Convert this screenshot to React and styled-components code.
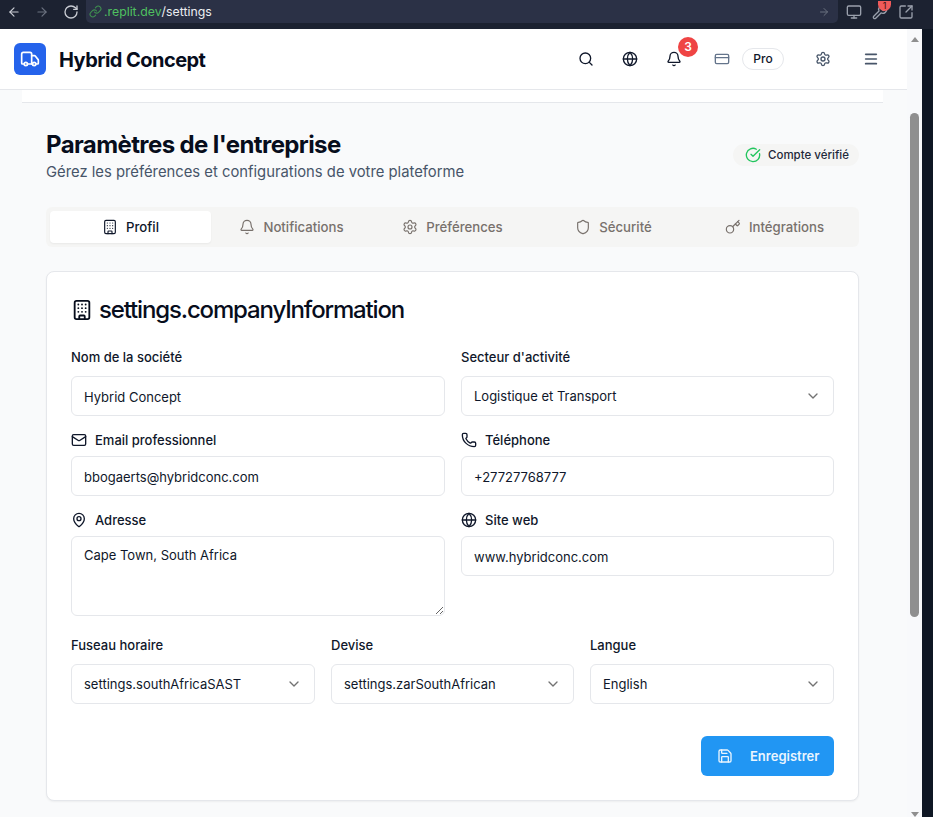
import React from 'react'
import styled, { createGlobalStyle } from 'styled-components'
import {
  ArrowLeft, ArrowRight, RotateCw, Link, Monitor, Wrench, SquareArrowOutUpRight, Truck, Search, Globe,
  Bell, CreditCard, Settings, Menu, CircleCheckBig, Building, Shield, Key, Mail, Phone, MapPin, ChevronDown, Save,
} from 'lucide-react'

const GlobalStyle = createGlobalStyle`
  html, body { margin: 0; padding: 0; height: 100%; overflow: hidden; }
  * { box-sizing: border-box; }
  body { font-family: Inter, "Liberation Sans", sans-serif; color: #0f172a; }
`

const Screen = styled.div`
  width: 933px;
  height: 817px;
  display: flex;
  flex-direction: column;
  overflow: hidden;
  background: #1c2231;
`

const BrowserBar = styled.div`
  height: 29px;
  flex: none;
  display: flex;
  align-items: flex-start;
  color: #c9ccd3;
  background: #1c2231;
`

const NavIcons = styled.div`
  width: 86px;
  height: 23px;
  flex: none;
  display: flex;
  align-items: center;
  gap: 14px;
  padding-left: 7px;
`

const AddressBar = styled.div`
  width: 752px;
  height: 23px;
  flex: none;
  display: flex;
  align-items: center;
  gap: 2px;
  padding: 0 8px 0 3px;
  background: #2b3146;
  border-radius: 0 0 5px 5px;
  font-size: 12.3px;
`

const Host = styled.span`
  color: #4fc060;
`

const Path = styled.span`
  color: #eceef2;
  margin-left: -2px;
  flex: 1;
`

const ChromeIcons = styled.div`
  flex: 1;
  height: 23px;
  display: flex;
  align-items: center;
  gap: 10px;
  padding-left: 8px;
  color: #9aa0ac;
`

const ExtensionIcon = styled.div`
  position: relative;
  display: flex;
`

const ExtensionBadge = styled.span`
  position: absolute;
  top: -3px;
  left: 6px;
  width: 13px;
  height: 10px;
  border-radius: 0 0 6.5px 6.5px;
  background: #f05a5a;
  color: #3a1010;
  font-size: 9px;
  line-height: 10px;
  text-align: center;
`

const Body = styled.div`
  flex: 1;
  display: flex;
  min-height: 0;
`

const Page = styled.div`
  width: 907px;
  flex: none;
  background: #f9fafb;
  overflow: hidden;
`

const Scrollbar = styled.div`
  width: 15px;
  flex: none;
  background: #f8f9fb;
  display: flex;
  flex-direction: column;
  align-items: center;
  padding-top: 8px;
`

const ScrollUp = styled.div`
  width: 0;
  height: 0;
  border-left: 4px solid transparent;
  border-right: 4px solid transparent;
  border-bottom: 5px solid #8f8f8f;
`

const ScrollThumb = styled.div`
  width: 9px;
  height: 504px;
  margin-top: 71px;
  border-radius: 5px;
  background: #8f8f8f;
`

const ScrollDown = styled.div`
  width: 0;
  height: 0;
  margin-top: 195px;
  border-left: 4px solid transparent;
  border-right: 4px solid transparent;
  border-top: 5px solid #8f8f8f;
`

const Edge = styled.div`
  flex: 1;
  background: #0f1724;
`

const Header = styled.header`
  height: 61px;
  display: flex;
  align-items: center;
  background: #fff;
  border-bottom: 1px solid #e5e7eb;
  padding: 0 10px 0 14px;
`

const LogoBox = styled.div`
  width: 32px;
  height: 32px;
  flex: none;
  border-radius: 6px;
  background: #2563eb;
  color: #fff;
  display: flex;
  align-items: center;
  justify-content: center;
`

const Brand = styled.h1`
  margin: 2px auto 0 13px;
  font-size: 20px;
  line-height: 28px;
  font-weight: 700;
  letter-spacing: -0.55px;
  color: #070d1c;
  white-space: nowrap;
`

const HeaderIcon = styled.div`
  width: ${p => p.$w || 44}px;
  height: 36px;
  flex: none;
  margin-left: ${p => p.$ml || 0}px;
  display: flex;
  align-items: center;
  justify-content: center;
  position: relative;
  color: ${p => p.$color || '#0f172a'};
`

const NotifBadge = styled.span`
  position: absolute;
  top: -4px;
  left: 26px;
  width: 20px;
  height: 20px;
  border-radius: 50%;
  background: #ef4444;
  color: #fff;
  font-size: 12px;
  font-weight: 600;
  line-height: 20px;
  text-align: center;
`

const ProPill = styled.div`
  width: 42px;
  height: 22px;
  flex: none;
  border: 1px solid #e5e7eb;
  border-radius: 11px;
  font-size: 12px;
  font-weight: 500;
  line-height: 20px;
  text-align: center;
  margin-right: 17px;
`

const SubStrip = styled.div`
  height: 13px;
  margin: 0 24px 0 22px;
  background: #fff;
  border-bottom: 1px solid #e5e7eb;
`

const Content = styled.main`
  padding: 26px 48px 0 46px;
`

const TitleRow = styled.div`
  display: flex;
  justify-content: space-between;
  align-items: flex-start;
  margin-bottom: 24px;
`

const PageTitle = styled.h2`
  margin: 0;
  font-size: 24px;
  line-height: 32px;
  font-weight: 700;
  letter-spacing: -0.6px;
  color: #070d1c;
`

const Subtitle = styled.p`
  margin: 0;
  font-size: 14.8px;
  line-height: 22px;
  color: #475569;
`

const VerifiedBadge = styled.div`
  margin-top: 15px;
  width: 126px;
  height: 22px;
  border-radius: 11px;
  background: #f5f5f4;
  display: flex;
  align-items: center;
  gap: 7px;
  padding-left: 12px;
  font-size: 11.5px;
  font-weight: 500;
  color: #1e293b;
`

const Tabs = styled.nav`
  height: 40px;
  padding: 4px;
  border-radius: 6px;
  background: #f5f5f4;
  display: grid;
  grid-template-columns: repeat(5, 1fr);
  margin-bottom: 24px;
`

const Tab = styled.div`
  display: flex;
  align-items: center;
  justify-content: center;
  gap: 8px;
  border-radius: 4px;
  font-size: 13.2px;
  font-weight: 500;
  background: ${p => (p.$active ? '#fff' : 'transparent')};
  color: ${p => (p.$active ? '#0f172a' : '#78716c')};
  box-shadow: ${p => (p.$active ? '0 1px 2px rgba(0,0,0,.05)' : 'none')};
`

const Card = styled.section`
  height: 530px;
  padding: 24px;
  background: #fff;
  border: 1px solid #e5e7eb;
  border-radius: 8px;
  box-shadow: 0 1px 2px rgba(0,0,0,.05);
`

const CardTitle = styled.h3`
  margin: 0 0 23px;
  display: flex;
  align-items: center;
  gap: 6px;
  font-size: 24px;
  line-height: 28px;
  font-weight: 500;
  letter-spacing: -1.15px;
  color: #070d1c;
`

const TwoCols = styled.div`
  display: grid;
  grid-template-columns: 374px 373px;
  gap: 16px;
  margin-bottom: ${p => p.$mb || 0}px;
`

const ThreeCols = styled.div`
  display: grid;
  grid-template-columns: 244px 243px 244px;
  gap: 16px;
  margin-top: 19px;
`

const Label = styled.label`
  height: 20px;
  display: flex;
  align-items: center;
  gap: 8px;
  font-size: 13px;
  font-weight: 500;
  color: #0f172a;
  margin-bottom: ${p => p.$mb || 6}px;
`

const Input = styled.input`
  display: block;
  width: 100%;
  height: 40px;
  padding: 2px 12px 0;
  border: 1px solid #e5e7eb;
  border-radius: 6px;
  background: #fff;
  outline: none;
  font: 400 13px Inter, sans-serif;
  color: #0f172a;
`

const TextArea = styled.textarea`
  display: block;
  width: 100%;
  height: 80px;
  padding: 8px 12px;
  border: 1px solid #e5e7eb;
  border-radius: 6px;
  background: #fff;
  outline: none;
  font: 400 13px/20px Inter, sans-serif;
  color: #0f172a;
`

const Select = styled.div`
  height: 40px;
  display: flex;
  align-items: center;
  justify-content: space-between;
  padding: 0 12px;
  border: 1px solid #e5e7eb;
  border-radius: 6px;
  background: #fff;
  font-size: 13px;
  color: #0f172a;
  svg { color: #737373; }
`

const Footer = styled.div`
  display: flex;
  justify-content: flex-end;
  margin-top: 32px;
`

const SaveButton = styled.button`
  width: 133px;
  height: 40px;
  border: 0;
  border-radius: 6px;
  background: #2196f3;
  color: #eaf5fe;
  display: flex;
  align-items: center;
  gap: 17px;
  padding: 0 0 0 16px;
  font: 600 13px Inter, sans-serif;
`

const Field = ({ icon: Icon, label, mb, children }) => (
  <div>
    <Label $mb={mb}>
      {Icon && <Icon size={16} strokeWidth={2} />}
      {label}
    </Label>
    {children}
  </div>
)

const Dropdown = ({ value }) => (
  <Select>
    {value}
    <ChevronDown size={16} strokeWidth={2} />
  </Select>
)

const tabs = [
  { label: 'Profil', icon: Building, active: true },
  { label: 'Notifications', icon: Bell },
  { label: 'Préférences', icon: Settings },
  { label: 'Sécurité', icon: Shield },
  { label: 'Intégrations', icon: Key },
]

export default function App() {
  return (
    <Screen>
      <GlobalStyle />
      <BrowserBar>
        <NavIcons>
          <ArrowLeft size={14} />
          <ArrowRight size={14} color="#6b7280" />
          <RotateCw size={16} />
        </NavIcons>
        <AddressBar>
          <Link size={13} color="#3f8f50" />
          <Host>.replit.dev</Host>
          <Path>/settings</Path>
          <ArrowRight size={12} color="#6b7280" />
        </AddressBar>
        <ChromeIcons>
          <Monitor size={16} />
          <ExtensionIcon>
            <Wrench size={16} />
            <ExtensionBadge>1</ExtensionBadge>
          </ExtensionIcon>
          <SquareArrowOutUpRight size={16} />
        </ChromeIcons>
      </BrowserBar>
      <Body>
        <Page>
          <Header>
            <LogoBox><Truck size={20} strokeWidth={2} /></LogoBox>
            <Brand>Hybrid Concept</Brand>
            <HeaderIcon><Search size={16} strokeWidth={2} /></HeaderIcon>
            <HeaderIcon><Globe size={16} strokeWidth={2} /></HeaderIcon>
            <HeaderIcon>
              <Bell size={16} strokeWidth={2} />
              <NotifBadge>3</NotifBadge>
            </HeaderIcon>
            <HeaderIcon $w={40} $ml={6} $color="#64748b"><CreditCard size={16} strokeWidth={2} /></HeaderIcon>
            <ProPill>Pro</ProPill>
            <HeaderIcon $color="#475569"><Settings size={16} strokeWidth={2} /></HeaderIcon>
            <HeaderIcon $w={52} $color="#475569"><Menu size={16} strokeWidth={2.5} /></HeaderIcon>
          </Header>
          <SubStrip />
          <Content>
            <TitleRow>
              <div>
                <PageTitle>Paramètres de l'entreprise</PageTitle>
                <Subtitle>Gérez les préférences et configurations de votre plateforme</Subtitle>
              </div>
              <VerifiedBadge>
                <CircleCheckBig size={16} color="#22c55e" strokeWidth={2} />
                Compte vérifié
              </VerifiedBadge>
            </TitleRow>
            <Tabs>
              {tabs.map(t => (
                <Tab key={t.label} $active={t.active}>
                  <t.icon size={16} strokeWidth={1.75} />
                  {t.label}
                </Tab>
              ))}
            </Tabs>
            <Card>
              <CardTitle>
                <Building size={22} strokeWidth={2} />
                settings.companyInformation
              </CardTitle>
              <TwoCols $mb={14}>
                <Field label="Nom de la société" mb={9}><Input defaultValue="Hybrid Concept" /></Field>
                <Field label="Secteur d'activité" mb={9}><Dropdown value="Logistique et Transport" /></Field>
              </TwoCols>
              <TwoCols $mb={14}>
                <Field icon={Mail} label="Email professionnel"><Input defaultValue="bbogaerts@hybridconc.com" /></Field>
                <Field icon={Phone} label="Téléphone"><Input defaultValue="+27727768777" /></Field>
              </TwoCols>
              <TwoCols>
                <Field icon={MapPin} label="Adresse"><TextArea defaultValue="Cape Town, South Africa" /></Field>
                <Field icon={Globe} label="Site web"><Input defaultValue="www.hybridconc.com" /></Field>
              </TwoCols>
              <ThreeCols>
                <Field label="Fuseau horaire" mb={9}><Dropdown value="settings.southAfricaSAST" /></Field>
                <Field label="Devise" mb={9}><Dropdown value="settings.zarSouthAfrican" /></Field>
                <Field label="Langue" mb={9}><Dropdown value="English" /></Field>
              </ThreeCols>
              <Footer>
                <SaveButton><Save size={16} strokeWidth={2} />Enregistrer</SaveButton>
              </Footer>
            </Card>
          </Content>
        </Page>
        <Scrollbar>
          <ScrollUp />
          <ScrollThumb />
          <ScrollDown />
        </Scrollbar>
        <Edge />
      </Body>
    </Screen>
  )
}
